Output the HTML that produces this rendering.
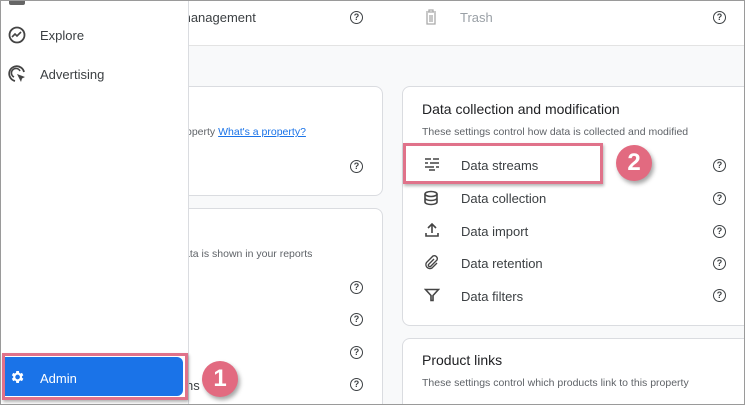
<!DOCTYPE html>
<html><head><style>
*{margin:0;padding:0;box-sizing:border-box}
html,body{width:745px;height:405px;overflow:hidden}
body{background:#f8f9fa;font-family:"Liberation Sans",Arial,sans-serif;position:relative;color:#3c4043}
.abs{position:absolute}
.frame{position:absolute;left:0;top:0;width:745px;height:405px;border:1px solid #9a9a9a;pointer-events:none;z-index:50}
.top{left:0;top:0;width:745px;height:46px;background:#fff;border-bottom:1px solid #e3e3e3}
.card{background:#fff;border:1px solid #dadce0;border-radius:8px}
.t{font-size:13px;color:#3c4043;white-space:nowrap}
.s{font-size:10.5px;color:#5f6368;white-space:nowrap}
.q{width:13px;height:13px;border:1.4px solid #3c4043;border-radius:50%;font-size:9px;font-weight:bold;text-align:center;line-height:10px;color:#3c4043}
.badge{width:36px;height:36px;border-radius:50%;background:#e26a80;color:#fff;font-size:24px;font-weight:bold;text-align:center;line-height:36px;box-shadow:2px 3px 4px rgba(0,0,0,.35);z-index:40}
.pink{border:3px solid #e0728a;z-index:30;box-shadow:1px 2px 3px rgba(0,0,0,.3)}
.ico{stroke:#444;fill:none;stroke-width:1.6}
</style></head><body>
<div class="abs top"></div>
<div class="abs t" style="left:180px;top:10px">management</div>
<div class="abs q" style="left:350px;top:11px">?</div>
<svg class="abs" style="left:424px;top:9px" width="14" height="16"><path d="M2 3h10M5 3V1h4v2M3 4v11h8V4M6 6v7M8 6v7" stroke="#aaa" fill="none" stroke-width="1.3"/></svg>
<div class="abs t" style="left:460px;top:10px;color:#9aa0a6">Trash</div>
<div class="abs q" style="left:713px;top:11px">?</div>

<div class="abs card" style="left:170px;top:86px;width:213px;height:110px"></div>
<div class="abs s" style="left:186px;top:126px">operty <span style="color:#1a73e8;text-decoration:underline">What's a property?</span></div>
<div class="abs q" style="left:350px;top:160px">?</div>

<div class="abs card" style="left:170px;top:208px;width:213px;height:197px;border-bottom:none;border-radius:8px 8px 0 0"></div>
<div class="abs s" style="left:184px;top:248px">ata is shown in your reports</div>
<div class="abs q" style="left:350px;top:281px">?</div>
<div class="abs q" style="left:350px;top:313px">?</div>
<div class="abs q" style="left:350px;top:346px">?</div>
<div class="abs q" style="left:350px;top:378px">?</div>
<div class="abs t" style="left:186px;top:378px">ns</div>

<div class="abs card" style="left:402px;top:86px;width:350px;height:240px"></div>
<div class="abs" style="left:422px;top:101px;font-size:14px;color:#202124">Data collection and modification</div>
<div class="abs s" style="left:422px;top:126px">These settings control how data is collected and modified</div>
<svg class="abs" style="left:424px;top:157px" width="16" height="14"><path d="M1 2h6M9 2h6M1 6h3M6 6h9M1 10h9M12 10h3M5 13h6" stroke="#444" stroke-width="1.6"/></svg>
<div class="abs t" style="left:461px;top:158px">Data streams</div>
<div class="abs q" style="left:713px;top:159px">?</div>
<svg class="abs" style="left:423px;top:190px" width="16" height="16"><ellipse cx="8" cy="4" rx="6" ry="2.5" class="ico"/><path d="M2 4v8c0 1.5 3 2.5 6 2.5s6-1 6-2.5V4M2 8c0 1.5 3 2.5 6 2.5s6-1 6-2.5" class="ico"/></svg>
<div class="abs t" style="left:461px;top:191px">Data collection</div>
<div class="abs q" style="left:713px;top:192px">?</div>
<svg class="abs" style="left:424px;top:222px" width="16" height="16"><path d="M8 11V2M4 6l4-4 4 4M2 11v3h12v-3" class="ico"/></svg>
<div class="abs t" style="left:461px;top:224px">Data import</div>
<div class="abs q" style="left:713px;top:225px">?</div>
<svg class="abs" style="left:424px;top:254px" width="16" height="16"><path d="M10 5L4.5 10.5a1.5 1.5 0 0 0 2 2L13 6a3 3 0 0 0-4-4L2.5 8.5a4 4 0 0 0 5.5 5.5L13 9" stroke="#444" fill="none" stroke-width="1.4"/></svg>
<div class="abs t" style="left:461px;top:256px">Data retention</div>
<div class="abs q" style="left:713px;top:257px">?</div>
<svg class="abs" style="left:424px;top:288px" width="16" height="14"><path d="M1.5 1.5h13L9 7.5v5H7v-5z" class="ico"/></svg>
<div class="abs t" style="left:461px;top:289px">Data filters</div>
<div class="abs q" style="left:713px;top:289px">?</div>

<div class="abs card" style="left:402px;top:338px;width:350px;height:67px;border-bottom:none;border-radius:8px 8px 0 0"></div>
<div class="abs" style="left:422px;top:352px;font-size:14px;color:#202124">Product links</div>
<div class="abs s" style="left:422px;top:377px">These settings control which products link to this property</div>

<div class="abs pink" style="left:403px;top:143px;width:200px;height:41px"></div>
<div class="abs badge" style="left:616px;top:145px">2</div>

<!-- sidebar -->
<div class="abs" style="left:0;top:0;width:189px;height:405px;background:#fff;border-right:1px solid #dadce0;z-index:20"></div>
<div class="abs" style="left:9px;top:0;width:16px;height:5px;background:#666;border-radius:0 0 2px 2px;z-index:21"></div>
<svg class="abs" style="left:8px;top:26px;z-index:21" width="18" height="18"><circle cx="9" cy="9" r="7.5" stroke="#444" fill="none" stroke-width="1.8"/><path d="M4 11l3-3 2 2 4-4" stroke="#444" fill="none" stroke-width="1.6"/></svg>
<div class="abs t" style="left:40px;top:28px;z-index:21">Explore</div>
<svg class="abs" style="left:8px;top:65px;z-index:21" width="18" height="18"><path d="M16 7A7.5 7.5 0 1 0 7 16" stroke="#444" fill="none" stroke-width="1.8"/><path d="M12 6A4.5 4.5 0 1 0 6 12" stroke="#444" fill="none" stroke-width="1.6"/><path d="M9 9l8 3-3 1.5L13 17z" fill="#444"/></svg>
<div class="abs t" style="left:40px;top:67px;z-index:21">Advertising</div>

<div class="abs" style="left:5px;top:357px;width:178px;height:39px;background:#1a73e8;border-radius:0 6px 6px 0;z-index:22"></div>
<svg class="abs" style="left:9px;top:369px;z-index:23" width="16" height="16" viewBox="0 0 24 24"><path fill="#fff" d="M19.4 13a7.5 7.5 0 0 0 0-2l2.1-1.6-2-3.5-2.5 1a7 7 0 0 0-1.700-1L14.9 3h-4l-.4 2.9a7 7 0 0 0-1.7 1l-2.5-1-2 3.5L6.4 11a7.5 7.5 0 0 0 0 2l-2.1 1.6 2 3.5 2.5-1a7 7 0 0 0 1.7 1l.4 2.9h4l.4-2.9a7 7 0 0 0 1.7-1l2.5 1 2-3.5zM12.9 15.5a3.5 3.5 0 1 1 0-7 3.5 3.5 0 0 1 0 7z"/></svg>
<div class="abs t" style="left:40px;top:371px;color:#fff;z-index:23">Admin</div>
<div class="abs pink" style="left:2px;top:353px;width:186px;height:47px;z-index:24"></div>
<div class="abs badge" style="left:202px;top:361px">1</div>
<div class="frame"></div>
</body></html>
